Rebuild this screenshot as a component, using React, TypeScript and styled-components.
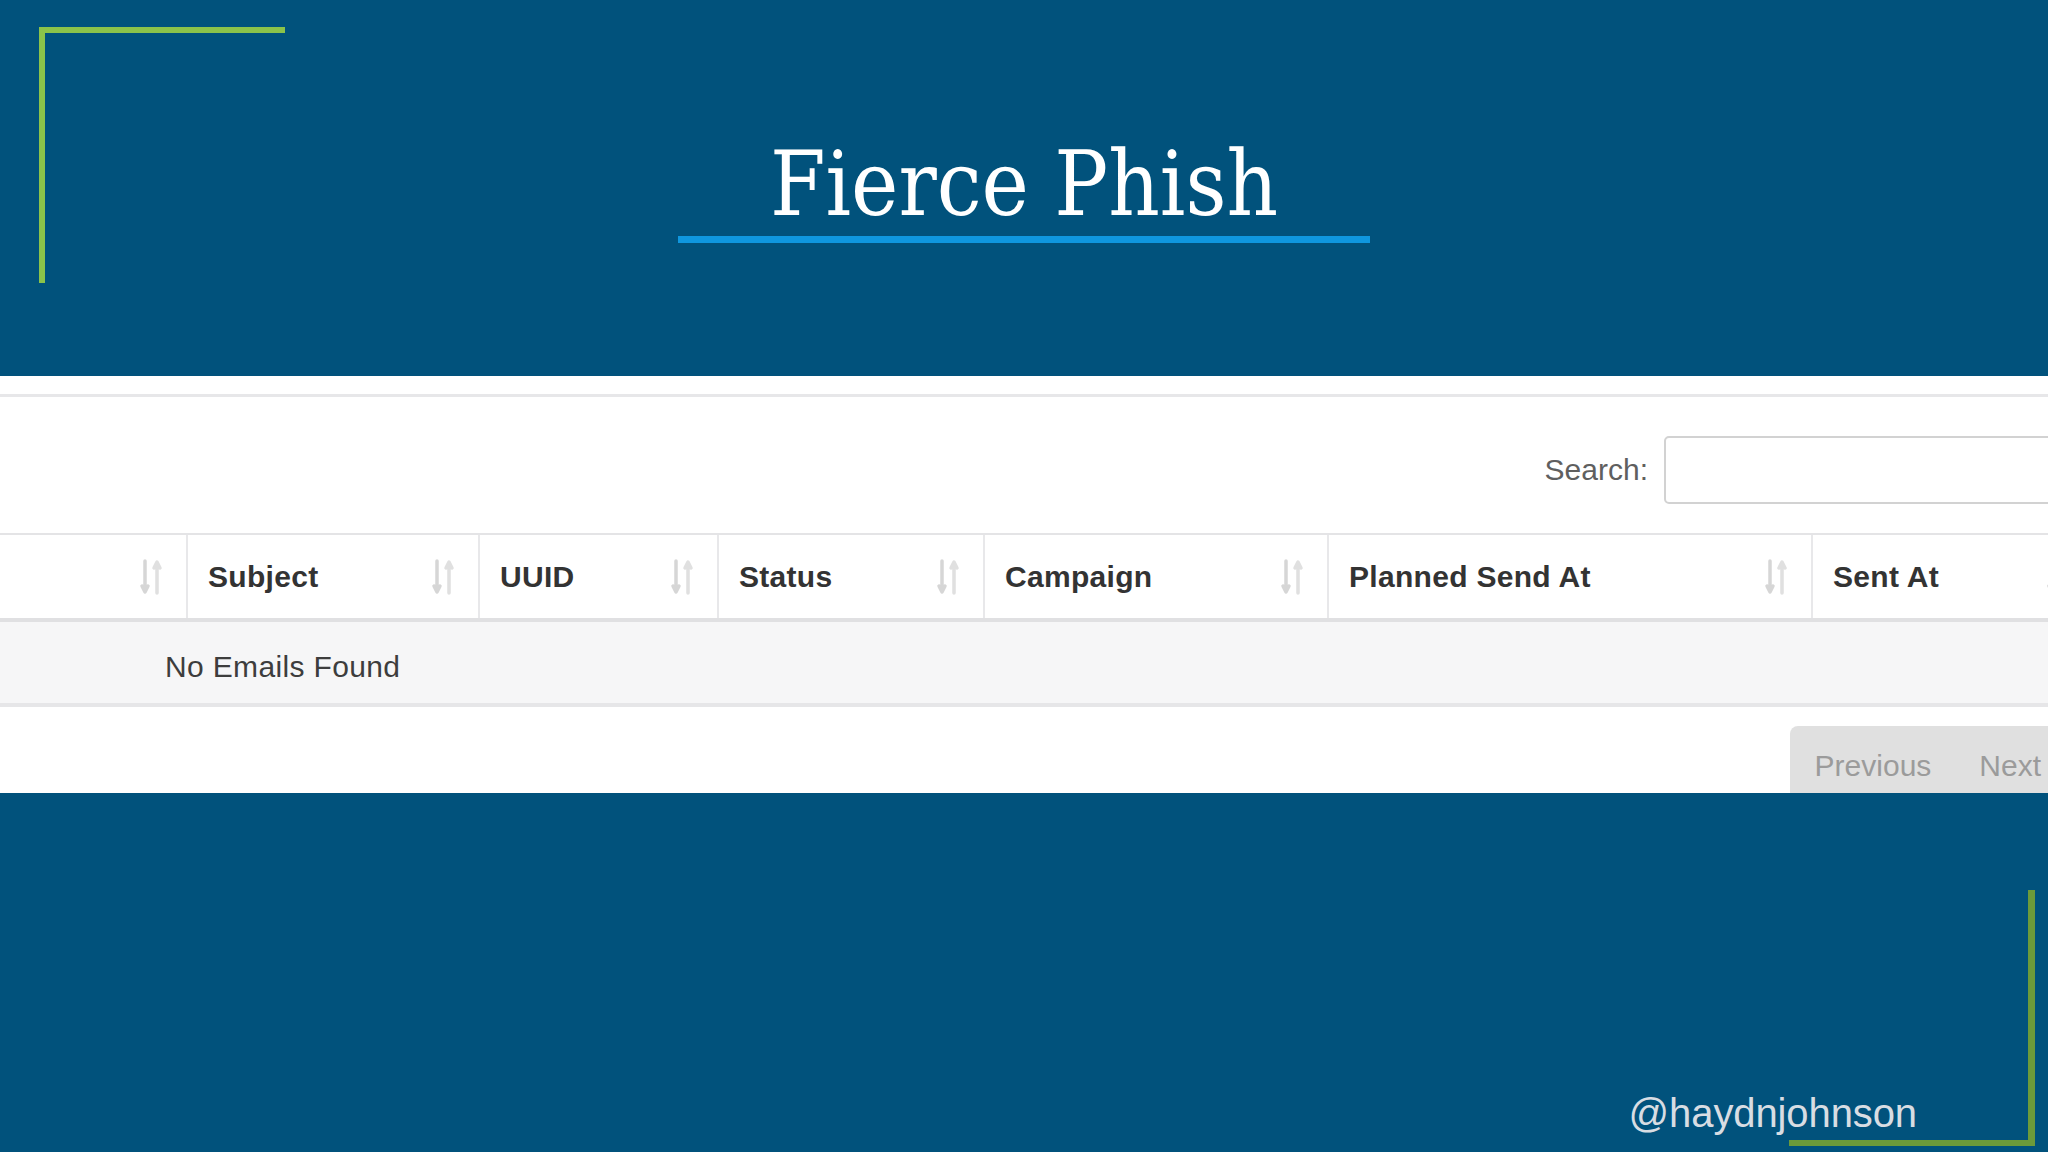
import React from "react";
import styled, { createGlobalStyle } from "styled-components";

const GlobalStyle = createGlobalStyle`
  html, body {
    margin: 0;
    padding: 0;
    background: #01527c;
  }
  body {
    font-family: "Liberation Sans", Arial, sans-serif;
  }
  * { box-sizing: border-box; }
`;

const Slide = styled.div`
  position: relative;
  width: 2048px;
  height: 1152px;
  overflow: hidden;
  background: #01527c;
  display: flex;
  flex-direction: column;
`;

const Corner = styled.div<{ $side: "tl" | "br" }>`
  position: absolute;
  width: 246px;
  height: 256px;
  ${(p) =>
    p.$side === "tl"
      ? `left: 39px; top: 27px; border-top: 6px solid #8bc34a; border-left: 6px solid #8bc34a;`
      : `left: 1789px; top: 890px; border-right: 7px solid #6c9a3a; border-bottom: 6px solid #6c9a3a;`}
`;

const Header = styled.header`
  height: 376px;
  flex: none;
  display: flex;
  flex-direction: column;
  align-items: center;
  padding-top: 140px;
`;

const Title = styled.h1`
  margin: 0;
  font-family: "DejaVu Serif", "Liberation Serif", serif;
  font-stretch: condensed;
  font-weight: 400;
  font-size: 89px;
  line-height: 89px;
  color: #ffffff;
  white-space: nowrap;
`;

const TitleRule = styled.div`
  width: 692px;
  height: 7px;
  margin-top: 7px;
  background: #0f97df;
`;

const Panel = styled.section`
  height: 417px;
  flex: none;
  background: #ffffff;
  overflow: hidden;
  display: flex;
  flex-direction: column;
`;

const TopRule = styled.div`
  margin-top: 18px;
  height: 3px;
  background: #e7e7e9;
  flex: none;
`;

const Toolbar = styled.div`
  margin-top: 39px;
  display: flex;
  justify-content: flex-end;
  align-items: center;
  gap: 16px;
  flex: none;
`;

const SearchLabel = styled.label`
  font-size: 30px;
  color: #5f5f5f;
`;

const SearchInput = styled.div`
  width: 424px;
  height: 68px;
  margin-right: -40px;
  border: 2px solid #d2d2d2;
  border-radius: 5px;
  background: #ffffff;
`;

const Table = styled.div`
  margin-top: 29px;
  width: 2093px;
  flex: none;
`;

const HeadRow = styled.div<{ $cols: string }>`
  display: grid;
  grid-template-columns: ${(p) => p.$cols};
  border-top: 2px solid #e4e4e6;
  border-bottom: 4px solid #e0e0e2;
  background: #ffffff;
`;

const HeadCell = styled.div<{ $first?: boolean }>`
  height: 83px;
  display: flex;
  align-items: center;
  justify-content: space-between;
  padding: 0 22px 0 20px;
  border-left: ${(p) => (p.$first ? "none" : "2px solid #e8e8ea")};
  font-size: 30px;
  font-weight: 700;
  letter-spacing: 0.3px;
  color: #333333;
  white-space: nowrap;
`;

const BodyRow = styled.div`
  height: 85px;
  display: flex;
  align-items: center;
  padding: 8px 0 0 165px;
  background: #f6f6f7;
  border-bottom: 4px solid #e6e6e8;
  font-size: 30px;
  letter-spacing: 0.35px;
  color: #3d3d3d;
`;

const Pager = styled.div`
  margin-top: 19px;
  display: flex;
  justify-content: flex-end;
  flex: none;
`;

const PagerGroup = styled.div`
  display: flex;
  height: 90px;
  margin-right: -16px;
  padding-top: 18px;
  background: #e0e0e0;
  border-radius: 8px 0 0 0;
`;

const PageButton = styled.span`
  padding: 0 23px 0 25px;
  font-size: 30px;
  line-height: 43px;
  color: #9b9b9b;
`;

const Footer = styled.footer`
  flex: 1;
  display: flex;
  flex-direction: column;
  justify-content: flex-end;
  align-items: flex-end;
  padding: 0 131px 16px 0;
`;

const Handle = styled.div`
  font-size: 40px;
  line-height: 46px;
  color: #d8dde3;
  letter-spacing: -0.1px;
`;

const SortIcon: React.FC = () => (
  <svg width="26" height="38" viewBox="0 0 26 38" aria-hidden="true">
    <g fill="none" strokeLinecap="round" strokeLinejoin="round">
      <path d="M7 3 V33 M4 28 L7 34 L10 28" stroke="#d6d6d6" strokeWidth="3.5" />
      <path d="M19 35 V5 M16 10 L19 4 L22 10" stroke="#e0e0e0" strokeWidth="3.5" />
    </g>
  </svg>
);

const columns = [
  { label: "", width: 186 },
  { label: "Subject", width: 292 },
  { label: "UUID", width: 239 },
  { label: "Status", width: 266 },
  { label: "Campaign", width: 344 },
  { label: "Planned Send At", width: 484 },
  { label: "Sent At", width: 282 },
];

export default function App() {
  const cols = columns.map((c) => `${c.width}px`).join(" ");
  return (
    <>
      <GlobalStyle />
      <Slide>
        <Corner $side="tl" />
        <Header>
          <Title>Fierce Phish</Title>
          <TitleRule />
        </Header>
        <Panel>
          <TopRule />
          <Toolbar>
            <SearchLabel>Search:</SearchLabel>
            <SearchInput />
          </Toolbar>
          <Table>
            <HeadRow $cols={cols}>
              {columns.map((c, i) => (
                <HeadCell key={i} $first={i === 0}>
                  <span>{c.label}</span>
                  <SortIcon />
                </HeadCell>
              ))}
            </HeadRow>
            <BodyRow>No Emails Found</BodyRow>
          </Table>
          <Pager>
            <PagerGroup>
              <PageButton>Previous</PageButton>
              <PageButton>Next</PageButton>
            </PagerGroup>
          </Pager>
        </Panel>
        <Footer>
          <Handle>@haydnjohnson</Handle>
        </Footer>
        <Corner $side="br" />
      </Slide>
    </>
  );
}
